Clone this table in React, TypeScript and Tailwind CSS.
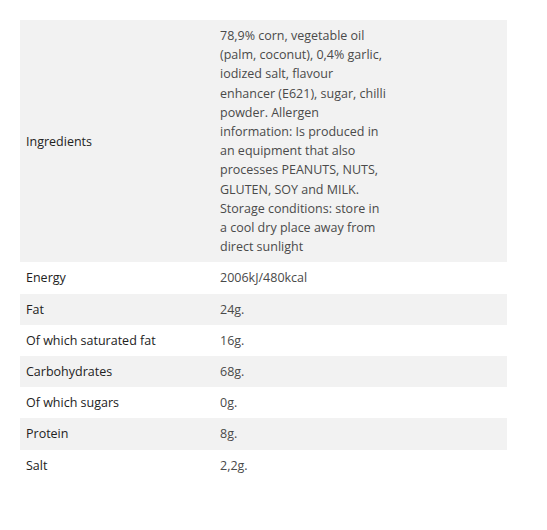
const rows = [
  {
    label: "Ingredients",
    value:
      "78,9% corn, vegetable oil (palm, coconut), 0,4% garlic, iodized salt, flavour enhancer (E621), sugar, chilli powder. Allergen information: Is produced in an equipment that also processes PEANUTS, NUTS, GLUTEN, SOY and MILK. Storage conditions: store in a cool dry place away from direct sunlight",
  },
  { label: "Energy", value: "2006kJ/480kcal" },
  { label: "Fat", value: "24g." },
  { label: "Of which saturated fat", value: "16g." },
  { label: "Carbohydrates", value: "68g." },
  { label: "Of which sugars", value: "0g." },
  { label: "Protein", value: "8g." },
  { label: "Salt", value: "2,2g." },
]

export default function App() {
  return (
    <div className="min-h-[530px] bg-white px-5 pt-5 font-['Open_Sans',sans-serif] text-[12.5px] leading-[19.2px]">
      <div className="w-[487px]">
        {rows.map((row, i) => (
          <div
            key={row.label}
            className={`flex items-center py-[6px] ${i % 2 === 0 ? "bg-[#f2f2f2]" : "bg-white"}`}
          >
            <div className="w-[200px] shrink-0 pl-[6px] text-[#222]">{row.label}</div>
            <div className="w-[166px] text-[#4a4a4a]">{row.value}</div>
          </div>
        ))}
      </div>
    </div>
  )
}
